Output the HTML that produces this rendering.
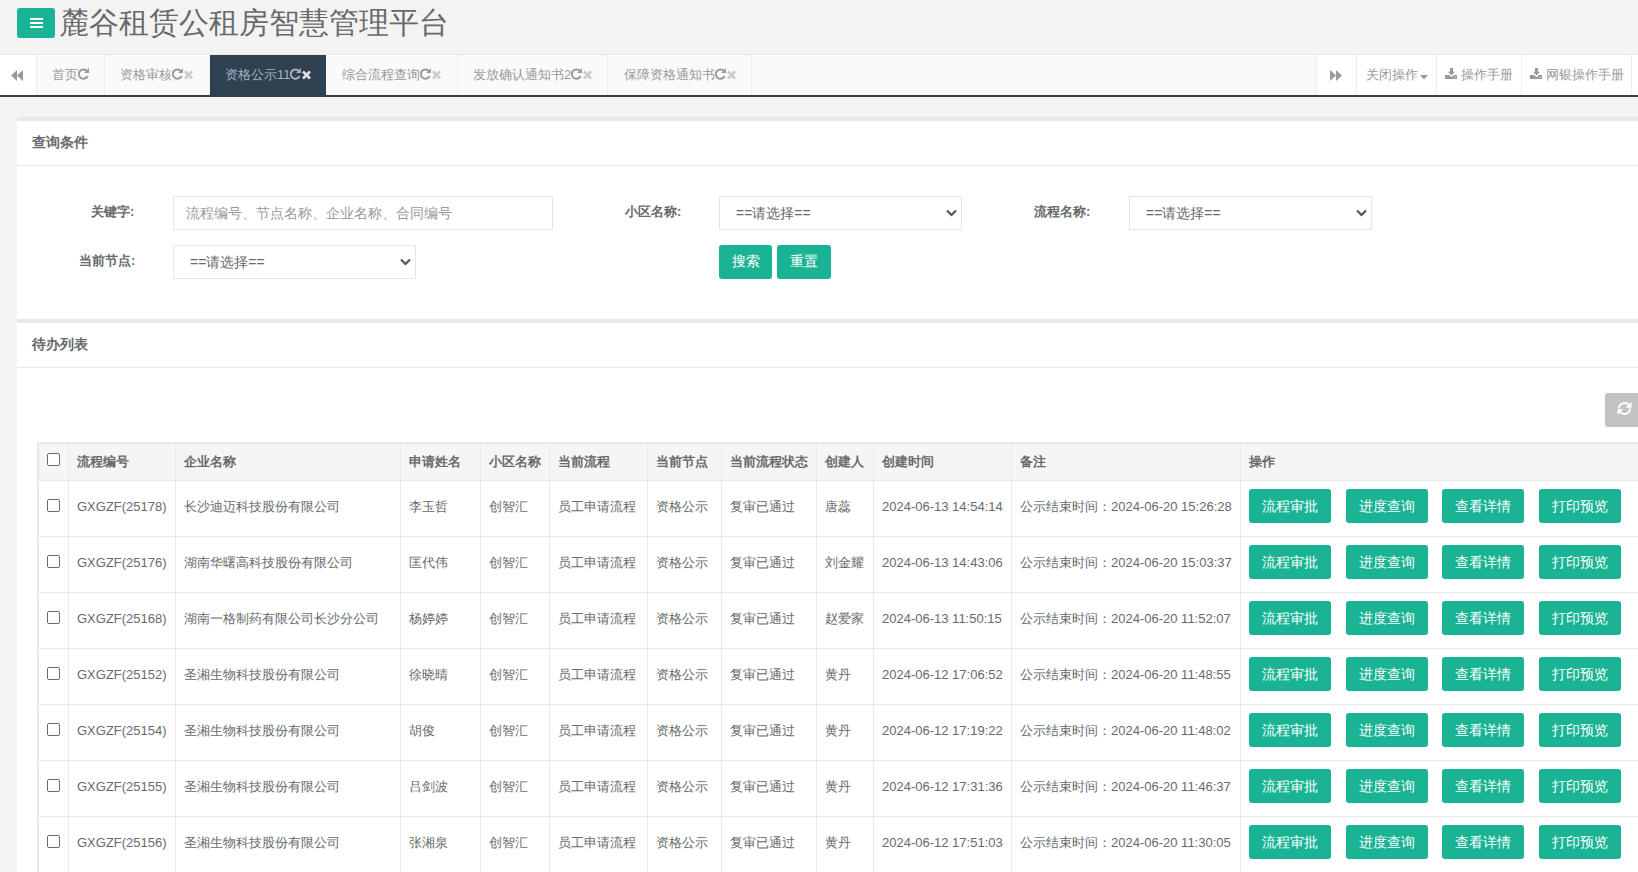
<!DOCTYPE html>
<html><head><meta charset="utf-8"><style>
*{box-sizing:border-box;margin:0;padding:0}
html,body{width:1638px;height:872px;overflow:hidden}
body{background:#f3f3f4;font-family:"Liberation Sans",sans-serif;color:#676a6c;position:relative;font-size:13px}
.a{position:absolute}
.t{position:absolute;white-space:nowrap;line-height:13px;font-size:13px}
.b{font-weight:bold}
.vl{position:absolute;width:1px;background:#e7eaec}
.hl{position:absolute;height:1px;background:#e7eaec}
.btn{position:absolute;background:#1ab394;border-radius:3px;color:#fff;font-size:14px;line-height:14px;white-space:nowrap}
.cb{position:absolute;width:13px;height:13px;border:1px solid #6b6b6b;border-radius:2px;background:#fff}
.sel{position:absolute;height:34px;border:1px solid #e5e6e7;background:#fff}
</style></head><body>

<div class="a" style="left:17px;top:8px;width:38px;height:30px;background:#1ab394;border-radius:3px"></div>
<div class="a" style="left:30px;top:18px;width:13px;height:2px;background:#fff"></div>
<div class="a" style="left:30px;top:22px;width:13px;height:2px;background:#fff"></div>
<div class="a" style="left:30px;top:26px;width:13px;height:2px;background:#fff"></div>
<div class="a" style="left:59px;top:8px;font-size:30px;line-height:30px;white-space:nowrap;color:#676a6c">麓谷租赁公租房智慧管理平台</div>
<div class="a" style="left:0;top:54px;width:1638px;height:1px;background:#e7eaec"></div>
<div class="a" style="left:0;top:55px;width:1638px;height:40px;background:#fafafa"></div>
<div class="a" style="left:0;top:95px;width:1638px;height:2px;background:#2f4050"></div>
<div class="a" style="left:0;top:97px;width:1638px;height:1px;background:#fff"></div>
<div class="a" style="left:0;top:55px;width:36px;height:40px;background:#fff"></div>
<div class="a" style="left:36px;top:55px;width:1px;height:40px;background:#eee"></div>
<svg class="a" style="left:11px;top:70px" width="12" height="11" viewBox="0 0 12 11"><path d="M0 5.5L6 0V11Z M6 5.5L12 0V11Z" fill="#999"/></svg>
<div class="a" style="left:1316px;top:55px;width:322px;height:40px;background:#fff"></div>
<div class="a" style="left:1316px;top:55px;width:1px;height:40px;background:#eee"></div>
<div class="a" style="left:1356px;top:55px;width:1px;height:40px;background:#eee"></div>
<div class="a" style="left:1436px;top:55px;width:1px;height:40px;background:#eee"></div>
<div class="a" style="left:1521px;top:55px;width:1px;height:40px;background:#eee"></div>
<div class="a" style="left:1631px;top:55px;width:1px;height:40px;background:#eee"></div>
<svg class="a" style="left:1330px;top:70px" width="12" height="11" viewBox="0 0 12 11"><path d="M0 0L6 5.5L0 11Z M6 0L12 5.5L6 11Z" fill="#999"/></svg>
<div class="t" style="left:1366px;top:68px;color:#999">关闭操作</div>
<svg class="a" style="left:1420px;top:75px" width="8" height="5" viewBox="0 0 8 5"><path d="M0 0H8L4 4.5Z" fill="#999"/></svg>
<svg class="a" style="left:1445px;top:68px" width="12" height="11" viewBox="0 0 12 11"><path d="M5 0H8V3.8H10L6.5 7.5L3 3.8H5Z" fill="#999"/><path d="M0 7H4.2L6.5 9.3L8.8 7H12V11H0Z" fill="#999"/><rect x="8.6" y="8.6" width="1" height="1" fill="#ddd"/><rect x="10.2" y="8.6" width="1" height="1" fill="#ddd"/></svg>
<div class="t" style="left:1461px;top:68px;color:#999">操作手册</div>
<svg class="a" style="left:1530px;top:68px" width="12" height="11" viewBox="0 0 12 11"><path d="M5 0H8V3.8H10L6.5 7.5L3 3.8H5Z" fill="#999"/><path d="M0 7H4.2L6.5 9.3L8.8 7H12V11H0Z" fill="#999"/><rect x="8.6" y="8.6" width="1" height="1" fill="#ddd"/><rect x="10.2" y="8.6" width="1" height="1" fill="#ddd"/></svg>
<div class="t" style="left:1546px;top:68px;color:#999">网银操作手册</div>
<div class="a" style="left:104px;top:55px;width:1px;height:40px;background:#eee"></div>
<div class="t" style="left:52px;top:68px;color:#999">首页</div>
<svg class="a" style="left:78px;top:68px" width="11" height="12" viewBox="0 0 11 12"><path d="M9 3.2A4.6 4.6 0 1 0 9.6 8" fill="none" stroke="#999" stroke-width="1.9"/><path d="M11 0V5H6Z" fill="#999"/></svg>
<div class="a" style="left:209px;top:55px;width:1px;height:40px;background:#eee"></div>
<div class="t" style="left:120px;top:68px;color:#999">资格审核</div>
<svg class="a" style="left:172px;top:68px" width="11" height="12" viewBox="0 0 11 12"><path d="M9 3.2A4.6 4.6 0 1 0 9.6 8" fill="none" stroke="#999" stroke-width="1.9"/><path d="M11 0V5H6Z" fill="#999"/></svg>
<svg class="a" style="left:184px;top:69.5px" width="9" height="10" viewBox="0 0 9 10"><path d="M1 1.5L8 8.5M8 1.5L1 8.5" stroke="#ccc" stroke-width="2.6"/></svg>
<div class="a" style="left:210px;top:55px;width:116px;height:40px;background:#2f4050"></div>
<div class="t" style="left:225px;top:68px;color:#a7b1c2">资格公示11</div>
<svg class="a" style="left:290px;top:68px" width="11" height="12" viewBox="0 0 11 12"><path d="M9 3.2A4.6 4.6 0 1 0 9.6 8" fill="none" stroke="#a7b1c2" stroke-width="1.9"/><path d="M11 0V5H6Z" fill="#a7b1c2"/></svg>
<svg class="a" style="left:302px;top:69.5px" width="9" height="10" viewBox="0 0 9 10"><path d="M1 1.5L8 8.5M8 1.5L1 8.5" stroke="#e0e0e0" stroke-width="2.6"/></svg>
<div class="a" style="left:457px;top:55px;width:1px;height:40px;background:#eee"></div>
<div class="t" style="left:342px;top:68px;color:#999">综合流程查询</div>
<svg class="a" style="left:420px;top:68px" width="11" height="12" viewBox="0 0 11 12"><path d="M9 3.2A4.6 4.6 0 1 0 9.6 8" fill="none" stroke="#999" stroke-width="1.9"/><path d="M11 0V5H6Z" fill="#999"/></svg>
<svg class="a" style="left:432px;top:69.5px" width="9" height="10" viewBox="0 0 9 10"><path d="M1 1.5L8 8.5M8 1.5L1 8.5" stroke="#ccc" stroke-width="2.6"/></svg>
<div class="a" style="left:607px;top:55px;width:1px;height:40px;background:#eee"></div>
<div class="t" style="left:473px;top:68px;color:#999">发放确认通知书2</div>
<svg class="a" style="left:571px;top:68px" width="11" height="12" viewBox="0 0 11 12"><path d="M9 3.2A4.6 4.6 0 1 0 9.6 8" fill="none" stroke="#999" stroke-width="1.9"/><path d="M11 0V5H6Z" fill="#999"/></svg>
<svg class="a" style="left:583px;top:69.5px" width="9" height="10" viewBox="0 0 9 10"><path d="M1 1.5L8 8.5M8 1.5L1 8.5" stroke="#ccc" stroke-width="2.6"/></svg>
<div class="a" style="left:751px;top:55px;width:1px;height:40px;background:#eee"></div>
<div class="t" style="left:624px;top:68px;color:#999">保障资格通知书</div>
<svg class="a" style="left:715px;top:68px" width="11" height="12" viewBox="0 0 11 12"><path d="M9 3.2A4.6 4.6 0 1 0 9.6 8" fill="none" stroke="#999" stroke-width="1.9"/><path d="M11 0V5H6Z" fill="#999"/></svg>
<svg class="a" style="left:727px;top:69.5px" width="9" height="10" viewBox="0 0 9 10"><path d="M1 1.5L8 8.5M8 1.5L1 8.5" stroke="#ccc" stroke-width="2.6"/></svg>
<div class="a" style="left:17px;top:117px;width:1621px;height:4px;background:#e7eaec"></div>
<div class="a" style="left:17px;top:121px;width:1621px;height:198px;background:#fff"></div>
<div class="a" style="left:17px;top:165px;width:1621px;height:1px;background:#e7eaec"></div>
<div class="t b" style="left:32px;top:135px;font-size:14px;line-height:14px;color:#676a6c">查询条件</div>
<div class="t b" style="left:91px;top:205px">关键字:</div>
<div class="sel" style="left:173px;top:196px;width:380px"></div>
<div class="t" style="left:186px;top:206px;color:#999;font-size:14px;line-height:14px">流程编号、节点名称、企业名称、合同编号</div>
<div class="t b" style="left:625px;top:205px">小区名称:</div>
<div class="sel" style="left:719px;top:196px;width:243px"></div><div class="t" style="left:736px;top:206px;color:#676a6c;font-size:14px;line-height:14px">==请选择==</div><svg class="a" style="left:946px;top:209px" width="11" height="8" viewBox="0 0 11 8"><path d="M1 1.5L5.5 6L10 1.5" fill="none" stroke="#555" stroke-width="2.2"/></svg>
<div class="t b" style="left:1034px;top:205px">流程名称:</div>
<div class="sel" style="left:1129px;top:196px;width:243px"></div><div class="t" style="left:1146px;top:206px;color:#676a6c;font-size:14px;line-height:14px">==请选择==</div><svg class="a" style="left:1356px;top:209px" width="11" height="8" viewBox="0 0 11 8"><path d="M1 1.5L5.5 6L10 1.5" fill="none" stroke="#555" stroke-width="2.2"/></svg>
<div class="t b" style="left:79px;top:254px">当前节点:</div>
<div class="sel" style="left:173px;top:245px;width:243px"></div><div class="t" style="left:190px;top:255px;color:#676a6c;font-size:14px;line-height:14px">==请选择==</div><svg class="a" style="left:400px;top:258px" width="11" height="8" viewBox="0 0 11 8"><path d="M1 1.5L5.5 6L10 1.5" fill="none" stroke="#555" stroke-width="2.2"/></svg>
<div class="btn" style="left:719px;top:245px;width:53px;height:34px;padding:9px 0 0 13px">搜索</div>
<div class="btn" style="left:777px;top:245px;width:54px;height:34px;padding:9px 0 0 13px">重置</div>
<div class="a" style="left:17px;top:319px;width:1621px;height:4px;background:#e7eaec"></div>
<div class="a" style="left:17px;top:323px;width:1621px;height:549px;background:#fff"></div>
<div class="a" style="left:17px;top:367px;width:1621px;height:1px;background:#e7eaec"></div>
<div class="t b" style="left:32px;top:337px;font-size:14px;line-height:14px;color:#676a6c">待办列表</div>
<div class="a" style="left:1605px;top:393px;width:40px;height:34px;background:#c2c2c2;border-radius:3px"></div>
<svg class="a" style="left:1617px;top:401px" width="15" height="15" viewBox="0 0 15 15"><path d="M2 7.5A5.5 5.5 0 0 1 11.6 3.9 M13 7.5A5.5 5.5 0 0 1 3.4 11.1" fill="none" stroke="#fff" stroke-width="2"/><path d="M14.5 1V6.8H8.7Z M0.5 14V8.2H6.3Z" fill="#fff"/></svg>
<div class="a" style="left:37px;top:442px;width:1601px;height:430px;background:#e7eaec"></div>
<div class="a" style="left:39px;top:444px;width:1599px;height:428px;background:#fff"></div>
<div class="a" style="left:39px;top:444px;width:1599px;height:36px;background:#f5f5f5"></div>
<div class="vl" style="left:68px;top:444px;height:428px"></div>
<div class="vl" style="left:175px;top:444px;height:428px"></div>
<div class="vl" style="left:400px;top:444px;height:428px"></div>
<div class="vl" style="left:480px;top:444px;height:428px"></div>
<div class="vl" style="left:549px;top:444px;height:428px"></div>
<div class="vl" style="left:647px;top:444px;height:428px"></div>
<div class="vl" style="left:721px;top:444px;height:428px"></div>
<div class="vl" style="left:816px;top:444px;height:428px"></div>
<div class="vl" style="left:873px;top:444px;height:428px"></div>
<div class="vl" style="left:1011px;top:444px;height:428px"></div>
<div class="vl" style="left:1240px;top:444px;height:428px"></div>
<div class="hl" style="left:39px;top:480px;width:1599px"></div>
<div class="hl" style="left:39px;top:536px;width:1599px"></div>
<div class="hl" style="left:39px;top:592px;width:1599px"></div>
<div class="hl" style="left:39px;top:648px;width:1599px"></div>
<div class="hl" style="left:39px;top:704px;width:1599px"></div>
<div class="hl" style="left:39px;top:760px;width:1599px"></div>
<div class="hl" style="left:39px;top:816px;width:1599px"></div>
<div class="cb" style="left:47px;top:453px"></div>
<div class="t b" style="left:77px;top:455px">流程编号</div>
<div class="t b" style="left:184px;top:455px">企业名称</div>
<div class="t b" style="left:409px;top:455px">申请姓名</div>
<div class="t b" style="left:489px;top:455px">小区名称</div>
<div class="t b" style="left:558px;top:455px">当前流程</div>
<div class="t b" style="left:656px;top:455px">当前节点</div>
<div class="t b" style="left:730px;top:455px">当前流程状态</div>
<div class="t b" style="left:825px;top:455px">创建人</div>
<div class="t b" style="left:882px;top:455px">创建时间</div>
<div class="t b" style="left:1020px;top:455px">备注</div>
<div class="t b" style="left:1249px;top:455px">操作</div>
<div class="cb" style="left:47px;top:499px"></div>
<div class="t" style="left:77px;top:500px">GXGZF(25178)</div>
<div class="t" style="left:184px;top:500px">长沙迪迈科技股份有限公司</div>
<div class="t" style="left:409px;top:500px">李玉哲</div>
<div class="t" style="left:489px;top:500px">创智汇</div>
<div class="t" style="left:558px;top:500px">员工申请流程</div>
<div class="t" style="left:656px;top:500px">资格公示</div>
<div class="t" style="left:730px;top:500px">复审已通过</div>
<div class="t" style="left:825px;top:500px">唐蕊</div>
<div class="t" style="left:882px;top:500px">2024-06-13 14:54:14</div>
<div class="t" style="left:1020px;top:500px">公示结束时间：2024-06-20 15:26:28</div>
<div class="btn" style="left:1249px;top:489px;width:82px;height:34px;padding:10px 0 0 13px">流程审批</div>
<div class="btn" style="left:1346px;top:489px;width:82px;height:34px;padding:10px 0 0 13px">进度查询</div>
<div class="btn" style="left:1442px;top:489px;width:82px;height:34px;padding:10px 0 0 13px">查看详情</div>
<div class="btn" style="left:1539px;top:489px;width:82px;height:34px;padding:10px 0 0 13px">打印预览</div>
<div class="cb" style="left:47px;top:555px"></div>
<div class="t" style="left:77px;top:556px">GXGZF(25176)</div>
<div class="t" style="left:184px;top:556px">湖南华曙高科技股份有限公司</div>
<div class="t" style="left:409px;top:556px">匡代伟</div>
<div class="t" style="left:489px;top:556px">创智汇</div>
<div class="t" style="left:558px;top:556px">员工申请流程</div>
<div class="t" style="left:656px;top:556px">资格公示</div>
<div class="t" style="left:730px;top:556px">复审已通过</div>
<div class="t" style="left:825px;top:556px">刘金耀</div>
<div class="t" style="left:882px;top:556px">2024-06-13 14:43:06</div>
<div class="t" style="left:1020px;top:556px">公示结束时间：2024-06-20 15:03:37</div>
<div class="btn" style="left:1249px;top:545px;width:82px;height:34px;padding:10px 0 0 13px">流程审批</div>
<div class="btn" style="left:1346px;top:545px;width:82px;height:34px;padding:10px 0 0 13px">进度查询</div>
<div class="btn" style="left:1442px;top:545px;width:82px;height:34px;padding:10px 0 0 13px">查看详情</div>
<div class="btn" style="left:1539px;top:545px;width:82px;height:34px;padding:10px 0 0 13px">打印预览</div>
<div class="cb" style="left:47px;top:611px"></div>
<div class="t" style="left:77px;top:612px">GXGZF(25168)</div>
<div class="t" style="left:184px;top:612px">湖南一格制药有限公司长沙分公司</div>
<div class="t" style="left:409px;top:612px">杨婷婷</div>
<div class="t" style="left:489px;top:612px">创智汇</div>
<div class="t" style="left:558px;top:612px">员工申请流程</div>
<div class="t" style="left:656px;top:612px">资格公示</div>
<div class="t" style="left:730px;top:612px">复审已通过</div>
<div class="t" style="left:825px;top:612px">赵爱家</div>
<div class="t" style="left:882px;top:612px">2024-06-13 11:50:15</div>
<div class="t" style="left:1020px;top:612px">公示结束时间：2024-06-20 11:52:07</div>
<div class="btn" style="left:1249px;top:601px;width:82px;height:34px;padding:10px 0 0 13px">流程审批</div>
<div class="btn" style="left:1346px;top:601px;width:82px;height:34px;padding:10px 0 0 13px">进度查询</div>
<div class="btn" style="left:1442px;top:601px;width:82px;height:34px;padding:10px 0 0 13px">查看详情</div>
<div class="btn" style="left:1539px;top:601px;width:82px;height:34px;padding:10px 0 0 13px">打印预览</div>
<div class="cb" style="left:47px;top:667px"></div>
<div class="t" style="left:77px;top:668px">GXGZF(25152)</div>
<div class="t" style="left:184px;top:668px">圣湘生物科技股份有限公司</div>
<div class="t" style="left:409px;top:668px">徐晓晴</div>
<div class="t" style="left:489px;top:668px">创智汇</div>
<div class="t" style="left:558px;top:668px">员工申请流程</div>
<div class="t" style="left:656px;top:668px">资格公示</div>
<div class="t" style="left:730px;top:668px">复审已通过</div>
<div class="t" style="left:825px;top:668px">黄丹</div>
<div class="t" style="left:882px;top:668px">2024-06-12 17:06:52</div>
<div class="t" style="left:1020px;top:668px">公示结束时间：2024-06-20 11:48:55</div>
<div class="btn" style="left:1249px;top:657px;width:82px;height:34px;padding:10px 0 0 13px">流程审批</div>
<div class="btn" style="left:1346px;top:657px;width:82px;height:34px;padding:10px 0 0 13px">进度查询</div>
<div class="btn" style="left:1442px;top:657px;width:82px;height:34px;padding:10px 0 0 13px">查看详情</div>
<div class="btn" style="left:1539px;top:657px;width:82px;height:34px;padding:10px 0 0 13px">打印预览</div>
<div class="cb" style="left:47px;top:723px"></div>
<div class="t" style="left:77px;top:724px">GXGZF(25154)</div>
<div class="t" style="left:184px;top:724px">圣湘生物科技股份有限公司</div>
<div class="t" style="left:409px;top:724px">胡俊</div>
<div class="t" style="left:489px;top:724px">创智汇</div>
<div class="t" style="left:558px;top:724px">员工申请流程</div>
<div class="t" style="left:656px;top:724px">资格公示</div>
<div class="t" style="left:730px;top:724px">复审已通过</div>
<div class="t" style="left:825px;top:724px">黄丹</div>
<div class="t" style="left:882px;top:724px">2024-06-12 17:19:22</div>
<div class="t" style="left:1020px;top:724px">公示结束时间：2024-06-20 11:48:02</div>
<div class="btn" style="left:1249px;top:713px;width:82px;height:34px;padding:10px 0 0 13px">流程审批</div>
<div class="btn" style="left:1346px;top:713px;width:82px;height:34px;padding:10px 0 0 13px">进度查询</div>
<div class="btn" style="left:1442px;top:713px;width:82px;height:34px;padding:10px 0 0 13px">查看详情</div>
<div class="btn" style="left:1539px;top:713px;width:82px;height:34px;padding:10px 0 0 13px">打印预览</div>
<div class="cb" style="left:47px;top:779px"></div>
<div class="t" style="left:77px;top:780px">GXGZF(25155)</div>
<div class="t" style="left:184px;top:780px">圣湘生物科技股份有限公司</div>
<div class="t" style="left:409px;top:780px">吕剑波</div>
<div class="t" style="left:489px;top:780px">创智汇</div>
<div class="t" style="left:558px;top:780px">员工申请流程</div>
<div class="t" style="left:656px;top:780px">资格公示</div>
<div class="t" style="left:730px;top:780px">复审已通过</div>
<div class="t" style="left:825px;top:780px">黄丹</div>
<div class="t" style="left:882px;top:780px">2024-06-12 17:31:36</div>
<div class="t" style="left:1020px;top:780px">公示结束时间：2024-06-20 11:46:37</div>
<div class="btn" style="left:1249px;top:769px;width:82px;height:34px;padding:10px 0 0 13px">流程审批</div>
<div class="btn" style="left:1346px;top:769px;width:82px;height:34px;padding:10px 0 0 13px">进度查询</div>
<div class="btn" style="left:1442px;top:769px;width:82px;height:34px;padding:10px 0 0 13px">查看详情</div>
<div class="btn" style="left:1539px;top:769px;width:82px;height:34px;padding:10px 0 0 13px">打印预览</div>
<div class="cb" style="left:47px;top:835px"></div>
<div class="t" style="left:77px;top:836px">GXGZF(25156)</div>
<div class="t" style="left:184px;top:836px">圣湘生物科技股份有限公司</div>
<div class="t" style="left:409px;top:836px">张湘泉</div>
<div class="t" style="left:489px;top:836px">创智汇</div>
<div class="t" style="left:558px;top:836px">员工申请流程</div>
<div class="t" style="left:656px;top:836px">资格公示</div>
<div class="t" style="left:730px;top:836px">复审已通过</div>
<div class="t" style="left:825px;top:836px">黄丹</div>
<div class="t" style="left:882px;top:836px">2024-06-12 17:51:03</div>
<div class="t" style="left:1020px;top:836px">公示结束时间：2024-06-20 11:30:05</div>
<div class="btn" style="left:1249px;top:825px;width:82px;height:34px;padding:10px 0 0 13px">流程审批</div>
<div class="btn" style="left:1346px;top:825px;width:82px;height:34px;padding:10px 0 0 13px">进度查询</div>
<div class="btn" style="left:1442px;top:825px;width:82px;height:34px;padding:10px 0 0 13px">查看详情</div>
<div class="btn" style="left:1539px;top:825px;width:82px;height:34px;padding:10px 0 0 13px">打印预览</div>
</body></html>
